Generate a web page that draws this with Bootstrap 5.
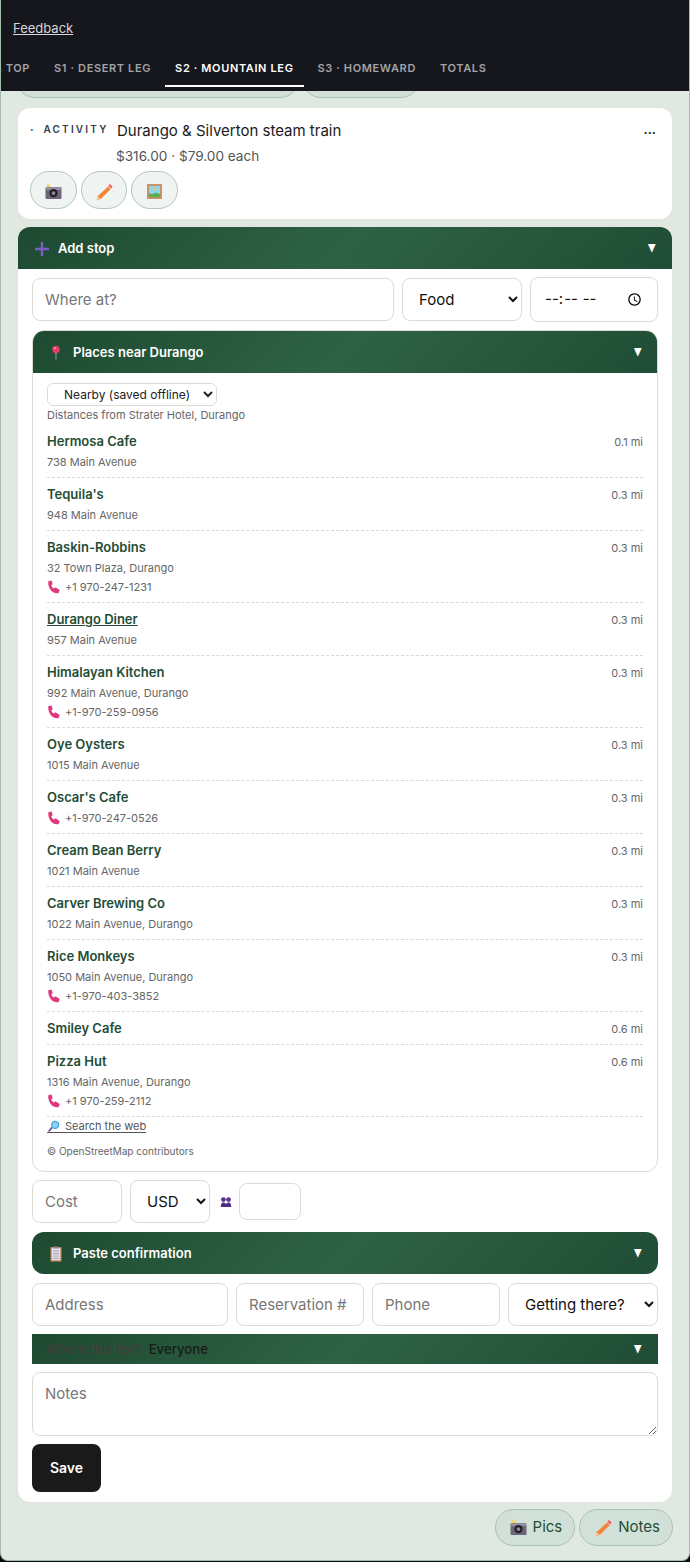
<!DOCTYPE html>
<html lang="en">
<head>
  <meta charset="UTF-8">
  <title>Trip planner</title>
  <link href="https://cdn.jsdelivr.net/npm/bootstrap@5.3.0/dist/css/bootstrap.min.css" rel="stylesheet">
  <style>
    html, body { height: 100%; }
    body { background: #0c0c10; font-family: Inter, "Liberation Sans", sans-serif; color: #1a1a1a; overflow: hidden; }
    .app-frame { height: 1561px; background: #dfe9e1; border: 1px solid #a5bcad; border-top: 0; border-radius: 0 0 8px 8px; overflow: hidden; }
    .top-bar { height: 91px; background: #16161d; margin: 0 -1px; }
    .feedback-row { height: 51px; padding: 20px 0 0 13px; }
    .feedback-row a { color: #d8d5dc; font-size: 13px; line-height: 17px; display: block; }
    .tab-strip { height: 40px; margin-left: -15px; gap: 4px; overflow: hidden; }
    .tab-link { font-size: 11px; font-weight: 600; letter-spacing: .63px; color: #a3a3a8; text-transform: uppercase; padding: 10px 10px 0; height: 36px; line-height: 15px; white-space: nowrap; text-decoration: none; }
    .tab-link.on { color: #fff; border-bottom: 2px solid #fff; }
    .cut-pills { height: 7px; overflow: hidden; padding-left: 15px; gap: 3px; }
    .cut-pill { height: 38px; margin-top: -31px; border: 1px solid #a9c0b2; background: #d2e1d8; border-radius: 19px; }
    .sheet { background: #fff; border-radius: 12px; margin: 0 17px; box-shadow: 0 0 0 1px #e4e4dc; }
    .stop-card { height: 111px; margin-top: 10px; padding: 12px; position: relative; }
    .kind-label { width: 87px; font-size: 10px; line-height: 18px; font-weight: 600; letter-spacing: 2.2px; color: #33404a; white-space: nowrap; }
    .kind-dot { color: #2f6244; font-weight: 800; margin-right: 3px; }
    .stop-title { font-size: 15px; line-height: 22px; }
    .stop-price { font-size: 13.6px; line-height: 18px; color: #555; margin-top: 5px; margin-left: -1px; }
    .more-dots { position: absolute; right: 16px; top: 14px; font-size: 13px; font-weight: 600; line-height: 20px; letter-spacing: 0; }
    .icon-row { margin-top: 6px; }
    .icon-pill { width: 47px; height: 38px; border: 1px solid #b5c7bc; background: #eff3f1; border-radius: 19px; padding: 0; }
    .icon-pill.thin { width: 46px; }
    .fold-head { height: 42px; background: linear-gradient(135deg, #1d4a31 0%, #2f6244 50%, #1f4d35 100%); color: #fff; font-size: 13px; font-weight: 600; padding: 1px 15px 0 16px; }
    .fold-ico { margin-right: 9px; }
    .fold-arrow { font-size: 11px; line-height: 1; display: inline-block; transform: scaleX(.75); margin-top: -1px; }
    .add-panel { margin-top: 8px; height: 1275px; }
    .add-head { border-radius: 12px 12px 0 0; }
    .add-head .fold-ico { margin-right: 8px; }
    .add-body { padding: 9px 14px 10px; }
    .fld { height: 43px; border: 1px solid #dddcd2; border-radius: 8px; background: #fff; font-size: 15px; padding: 0 12px; font-family: inherit; color: #111; outline: 0; min-width: 0; }
    .fld::placeholder { color: #777; opacity: 1; }
    .fld-time { height: 45px; margin-top: -1px; padding-left: 14px; padding-right: 11px; }
    .fld-sel { padding-left: 12px; }
    .places-box { border: 1px solid #dddcd2; border-radius: 12px; margin-top: 8px; height: 842px; overflow: hidden; }
    .places-head { margin: -1px -1px 0; height: 43px; padding-top: 2px; }
    .places-inner { padding: 10px 14px 0; }
    .source-pick { width: 170px; height: 23px; font-size: 12px; border: 1px solid #dddcd2; border-radius: 6px; background: #fff; font-family: inherit; color: #222; padding: 0 0 0 12px; display: block; }
    .hint { font-size: 11px; line-height: 14px; color: #666; margin-top: 2px; margin-bottom: 3px; }
    .spot { padding: 8px 0; border-bottom: 1px dashed #d9d9d2; }
    .spot-name { font-size: 13px; font-weight: 600; line-height: 16px; color: #1f4d36; }
    .spot-name.linked { text-decoration: underline; }
    .spot-dist { font-size: 11px; color: #666; line-height: 16px; padding-top: 1px; margin-bottom: -1px; }
    .spot-addr { font-size: 11px; color: #666; line-height: 16px; margin-top: 5px; }
    .spot-addr:last-child, .spot-tel { margin-bottom: -1px; }
    .spot-tel { font-size: 11px; color: #666; line-height: 16px; margin-top: 3px; }
    .web-link { font-size: 11px; line-height: 11px; color: #555; display: flex; width: fit-content; align-items: flex-end; gap: 4px; margin-top: 3px; border-bottom: 1px solid #555; text-decoration: none; }
    .osm-note { font-size: 10px; line-height: 14px; color: #666; margin-top: 11px; }
    .cost-row { margin-top: 8px; height: 43px; }
    .people-ico { margin: 0 -1px 0 2px; }
    .head-count { width: 62px; height: 37px; }
    .paste-head { border-radius: 12px; margin-top: 9px; }
    .detail-row { margin-top: 9px; }
    .who-bar { height: 30px; margin-top: 8px; background: linear-gradient(135deg, #1d4a31 0%, #2f6244 50%, #1f4d35 100%); font-size: 13.2px; font-weight: 500; padding: 1px 15px 0 14px; color: #1a1a1a; }
    .who-muted { color: #443c3c; font-weight: 500; }
    .notes-box { display: block; width: 100%; height: 64px; margin-top: 8px; padding: 10px 12px; resize: vertical; }
    .save-btn { width: 69px; height: 48px; margin-top: 8px; padding-bottom: 2px; background: #1a1a1a; color: #fff; font-weight: 600; font-size: 14px; border: 0; border-radius: 8px; }
    .foot-pills { margin: 7px 16px 0 0; gap: 4px; }
    .foot-pill { height: 37px; border: 1px solid #a9c0b2; background: #d2e1d8; border-radius: 19px; color: #1f4d36; font-size: 15px; font-weight: 400; padding: 0 12px 0 14px; font-family: inherit; display: flex; align-items: center; gap: 6px; }
  </style>
</head>
<body>
<svg width="0" height="0" class="d-block">
  <defs>
    <symbol id="ic-camera" viewBox="0 0 16 16">
      <path fill="#f6d458" d="M2 .8 5 2.200 4.400 5H2z"/>
      <rect x=".5" y="4" width="15" height="11" rx="1" fill="#6e6578"/>
      <rect x=".5" y="4.500" width="15" height="2" fill="#9a93a3"/>
      <circle cx="8" cy="9.500" r="3.800" fill="#221e26"/><circle cx="8" cy="9.500" r="1.800" fill="#8e8998"/>
    </symbol>
    <symbol id="ic-pencil" viewBox="0 0 16 16">
      <path fill="#f58536" d="M11.600 3 14 5.400 5.200 14.200 1.800 15 2.300 11.700z"/>
      <path fill="#f2575b" d="M11.800 2.200 13.200.8 15.600 3.200 14.300 4.800z"/>
      <path fill="#f6c79b" d="M2.300 11.700 5.200 14.200 1.500 15.200z"/>
    </symbol>
    <symbol id="ic-frame" viewBox="0 0 16 16">
      <rect x="1" y="1" width="14" height="14" fill="#c78f62"/>
      <rect x="2.800" y="2.800" width="10.400" height="10.400" fill="#8fd6ee"/>
      <circle cx="8" cy="5.500" r="1.500" fill="#f5c63c"/>
      <path fill="#55b24f" d="M2.800 13.200V9.300l3 1.200 3-1.500 4.400 1.300v2.900z"/>
    </symbol>
    <symbol id="ic-plus" viewBox="0 0 16 16"><path fill="#7a5cc2" d="M6.800 1h2.400v5.800H15v2.400H9.200V15H6.800V9.200H1V6.800h5.800z"/></symbol>
    <symbol id="ic-pin" viewBox="0 0 16 16">
      <path fill="#a9a9a9" d="M7.400 7h1.200l-.3 8.500h-.6z"/>
      <circle cx="8" cy="4.500" r="3.700" fill="#e93a66"/><circle cx="6.800" cy="3.300" r="1" fill="#f7a0b8"/>
    </symbol>
    <symbol id="ic-phone" viewBox="0 0 16 16">
      <path fill="#e0387f" d="M1.500 1.500 5.200.5l1.300 4.300-1.700 1.100c.5 1.700 1.600 3 3.300 3.900l1.500-1.500 5 3-1.500 3.700C6.500 16.200.8 9.800 1.500 1.500z"/>
    </symbol>
    <symbol id="ic-glass" viewBox="0 0 16 16">
      <path stroke="#7a4fa3" stroke-width="2.400" stroke-linecap="round" d="M5 10.500 1.500 14.500"/>
      <circle cx="9.500" cy="6.500" r="5.500" fill="#3aa3dc"/><circle cx="9.500" cy="6.500" r="3.800" fill="#8ed3f3"/>
    </symbol>
    <symbol id="ic-clip" viewBox="0 0 16 16">
      <rect x="2.500" y="1" width="11" height="14.500" rx="1" fill="#d08d5c"/>
      <rect x="3.800" y="2.200" width="8.400" height="12" fill="#e6e2ee"/>
      <path stroke="#a29cb0" d="M5 5h6M5 7.500h6M5 10h6M5 12.300h6"/>
      <rect x="5.500" y=".5" width="5" height="2" fill="#8a8792"/>
    </symbol>
    <symbol id="ic-people" viewBox="0 0 16 16">
      <circle cx="4.600" cy="4.800" r="3.200" fill="#5a3291"/><circle cx="11.400" cy="4.800" r="3.200" fill="#5a3291"/>
      <path fill="#4f2d83" d="M1 14.500c0-3.600.8-6 3.600-6 1.600 0 2.800.8 3.400 2 .6-1.200 1.800-2 3.400-2 2.800 0 3.600 2.400 3.600 6z"/>
    </symbol>
  </defs>
</svg>

<div class="app-frame">
  <div class="top-bar">
    <div class="feedback-row"><a href="#">Feedback</a></div>
    <nav class="tab-strip d-flex">
      <a class="tab-link" href="#">⌂ Top</a>
      <a class="tab-link" href="#">S1 · Desert Leg</a>
      <a class="tab-link on" href="#">S2 · Mountain Leg</a>
      <a class="tab-link" href="#">S3 · Homeward</a>
      <a class="tab-link" href="#">Totals</a>
    </nav>
  </div>

  <div class="cut-pills d-flex">
    <div class="cut-pill" style="width:283px"></div>
    <div class="cut-pill" style="width:118px"></div>
  </div>

  <div class="sheet stop-card">
    <div class="d-flex">
      <div class="kind-label"><span class="kind-dot">·</span> ACTIVITY</div>
      <div>
        <div class="stop-title">Durango &amp; Silverton steam train</div>
        <div class="stop-price">$316.00 · $79.00 each</div>
      </div>
    </div>
    <span class="more-dots">···</span>
    <div class="icon-row d-flex gap-1">
      <button class="icon-pill"><svg width="17" height="17"><use href="#ic-camera"/></svg></button>
      <button class="icon-pill thin"><svg width="18" height="18"><use href="#ic-pencil"/></svg></button>
      <button class="icon-pill"><svg width="17" height="17"><use href="#ic-frame"/></svg></button>
    </div>
  </div>

  <div class="sheet add-panel">
    <div class="fold-head add-head d-flex align-items-center">
      <svg width="16" height="16" class="fold-ico"><use href="#ic-plus"/></svg>
      <span class="flex-grow-1">Add stop</span>
      <span class="fold-arrow">▼</span>
    </div>
    <div class="add-body">
      <div class="d-flex gap-2 align-items-start">
        <input class="fld flex-grow-1" placeholder="Where at?">
        <select class="fld fld-sel" style="width:120px"><option>Food</option></select>
        <input class="fld fld-time" type="time" style="width:128px;flex:none">
      </div>

      <div class="places-box">
        <div class="fold-head places-head d-flex align-items-center">
          <svg width="16" height="16" class="fold-ico"><use href="#ic-pin"/></svg>
          <span class="flex-grow-1">Places near Durango</span>
          <span class="fold-arrow">▼</span>
        </div>
        <div class="places-inner">
          <select class="source-pick"><option>Nearby (saved offline)</option></select>
          <div class="hint">Distances from Strater Hotel, Durango</div>

          <div class="spot">
            <div class="d-flex justify-content-between"><span class="spot-name">Hermosa Cafe</span><span class="spot-dist">0.1 mi</span></div>
            <div class="spot-addr">738 Main Avenue</div>
          </div>
          <div class="spot">
            <div class="d-flex justify-content-between"><span class="spot-name">Tequila's</span><span class="spot-dist">0.3 mi</span></div>
            <div class="spot-addr">948 Main Avenue</div>
          </div>
          <div class="spot">
            <div class="d-flex justify-content-between"><span class="spot-name">Baskin-Robbins</span><span class="spot-dist">0.3 mi</span></div>
            <div class="spot-addr">32 Town Plaza, Durango</div>
            <div class="spot-tel"><svg width="14" height="14" class="me-1 align-text-bottom"><use href="#ic-phone"/></svg>+1 970-247-1231</div>
          </div>
          <div class="spot">
            <div class="d-flex justify-content-between"><span class="spot-name linked">Durango Diner</span><span class="spot-dist">0.3 mi</span></div>
            <div class="spot-addr">957 Main Avenue</div>
          </div>
          <div class="spot">
            <div class="d-flex justify-content-between"><span class="spot-name">Himalayan Kitchen</span><span class="spot-dist">0.3 mi</span></div>
            <div class="spot-addr">992 Main Avenue, Durango</div>
            <div class="spot-tel"><svg width="14" height="14" class="me-1 align-text-bottom"><use href="#ic-phone"/></svg>+1-970-259-0956</div>
          </div>
          <div class="spot">
            <div class="d-flex justify-content-between"><span class="spot-name">Oye Oysters</span><span class="spot-dist">0.3 mi</span></div>
            <div class="spot-addr">1015 Main Avenue</div>
          </div>
          <div class="spot">
            <div class="d-flex justify-content-between"><span class="spot-name">Oscar's Cafe</span><span class="spot-dist">0.3 mi</span></div>
            <div class="spot-addr"><svg width="14" height="14" class="me-1 align-text-bottom"><use href="#ic-phone"/></svg>+1-970-247-0526</div>
          </div>
          <div class="spot">
            <div class="d-flex justify-content-between"><span class="spot-name">Cream Bean Berry</span><span class="spot-dist">0.3 mi</span></div>
            <div class="spot-addr">1021 Main Avenue</div>
          </div>
          <div class="spot">
            <div class="d-flex justify-content-between"><span class="spot-name">Carver Brewing Co</span><span class="spot-dist">0.3 mi</span></div>
            <div class="spot-addr">1022 Main Avenue, Durango</div>
          </div>
          <div class="spot">
            <div class="d-flex justify-content-between"><span class="spot-name">Rice Monkeys</span><span class="spot-dist">0.3 mi</span></div>
            <div class="spot-addr">1050 Main Avenue, Durango</div>
            <div class="spot-tel"><svg width="14" height="14" class="me-1 align-text-bottom"><use href="#ic-phone"/></svg>+1-970-403-3852</div>
          </div>
          <div class="spot">
            <div class="d-flex justify-content-between"><span class="spot-name">Smiley Cafe</span><span class="spot-dist">0.6 mi</span></div>
          </div>
          <div class="spot">
            <div class="d-flex justify-content-between"><span class="spot-name">Pizza Hut</span><span class="spot-dist">0.6 mi</span></div>
            <div class="spot-addr">1316 Main Avenue, Durango</div>
            <div class="spot-tel"><svg width="14" height="14" class="me-1 align-text-bottom"><use href="#ic-phone"/></svg>+1 970-259-2112</div>
          </div>

          <a class="web-link" href="#"><svg width="14" height="12"><use href="#ic-glass"/></svg><span>Search the web</span></a>
          <div class="osm-note">© OpenStreetMap contributors</div>
        </div>
      </div>

      <div class="cost-row d-flex gap-2 align-items-center">
        <input class="fld" placeholder="Cost" style="width:90px">
        <select class="fld fld-sel" style="width:80px"><option>USD</option></select>
        <svg width="12" height="12" class="people-ico"><use href="#ic-people"/></svg>
        <input class="fld head-count">
      </div>

      <div class="fold-head paste-head d-flex align-items-center">
        <svg width="16" height="16" class="fold-ico"><use href="#ic-clip"/></svg>
        <span class="flex-grow-1">Paste confirmation</span>
        <span class="fold-arrow">▼</span>
      </div>

      <div class="detail-row d-flex gap-2">
        <input class="fld" placeholder="Address" style="width:196px">
        <input class="fld" placeholder="Reservation #" style="width:128px">
        <input class="fld" placeholder="Phone" style="width:128px">
        <select class="fld fld-sel" style="width:150px"><option>Getting there?</option></select>
      </div>

      <div class="who-bar d-flex align-items-center">
        <span class="who-muted me-2">Who's this for?</span>
        <span class="flex-grow-1">Everyone</span>
        <span class="fold-arrow text-white">▼</span>
      </div>

      <textarea class="fld notes-box" placeholder="Notes"></textarea>
      <button class="save-btn d-block">Save</button>
    </div>
  </div>

  <div class="foot-pills d-flex justify-content-end">
    <button class="foot-pill"><svg width="17" height="17"><use href="#ic-camera"/></svg>Pics</button>
    <button class="foot-pill"><svg width="18" height="18"><use href="#ic-pencil"/></svg>Notes</button>
  </div>
</div>

<script src="https://cdn.jsdelivr.net/npm/bootstrap@5.3.0/dist/js/bootstrap.bundle.min.js"></script>
</body>
</html>
